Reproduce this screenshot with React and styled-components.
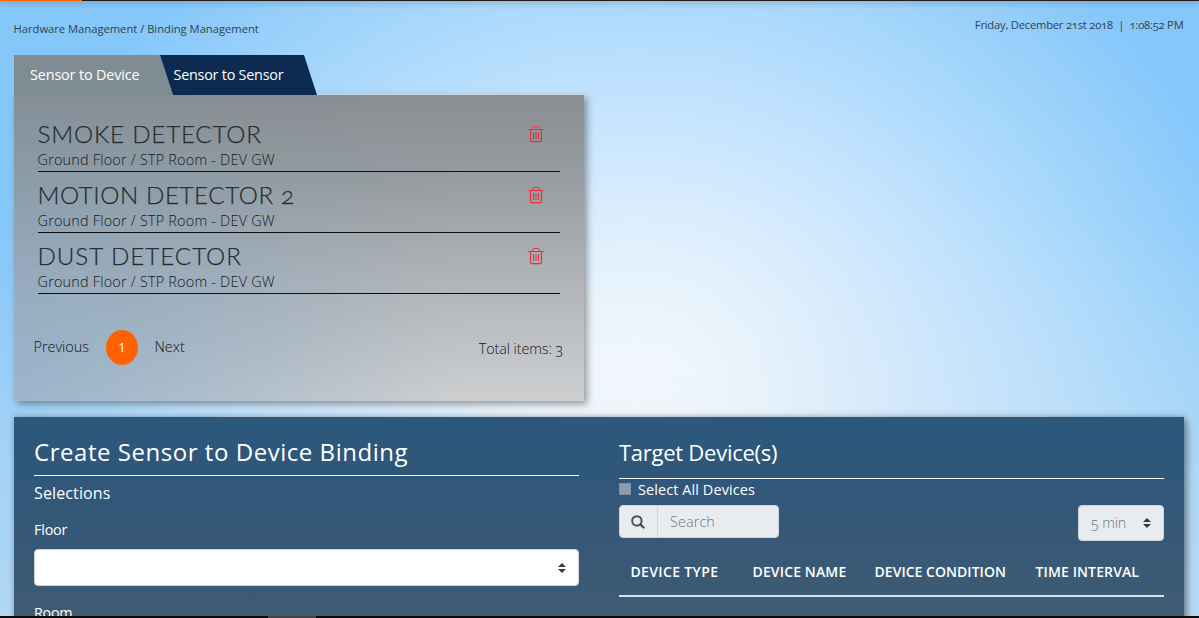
import React from "react";
import styled, { createGlobalStyle } from "styled-components";

const GlobalStyle = createGlobalStyle`
  *, *::before, *::after { box-sizing: border-box; }
  body {
    margin: 0;
    overflow: hidden;
    font-family: "Open Sans", "Liberation Sans", sans-serif;
    font-size: 14.4px;
    font-weight: 400;
    font-variant-numeric: oldstyle-nums;
    color: #212529;
  }
`;

const Page = styled.div`
  height: 618px;
  display: flex;
  flex-direction: column;
  overflow: hidden;
  background:
    linear-gradient(180deg, rgba(205, 226, 242, 0) 35%, rgba(205, 226, 242, 0.6) 100%),
    radial-gradient(ellipse 635px 600px at 635px 440px, #ffffff 0%, #f8fbfe 15%, #d8ecfd 40%, #b8defd 65%, #9ed3fb 84%, #86c7fa 103%);
`;

const LoadingBar = styled.div`
  flex: none;
  height: 1px;
  background: linear-gradient(90deg, #ff6200 82px, #221a18 82px);
  box-shadow: 0 0 7px 1px rgba(40, 60, 80, 0.45);
`;

const TopBar = styled.header`
  flex: none;
  height: 54px;
  padding: 16px 15.5px 0 13.5px;
  display: flex;
  justify-content: space-between;
  font-size: 11.2px;
  line-height: 16px;
  color: #2c4354;
  white-space: pre;
`;

const Breadcrumb = styled.span`
  padding-top: 4px;
`;

const Clock = styled.time`
  letter-spacing: -0.21px;
`;

const Content = styled.main`
  flex: 1;
  min-height: 0;
  padding: 0 15px 0 14px;
  display: flex;
  flex-direction: column;
  overflow: hidden;
`;

const Tabs = styled.nav`
  flex: none;
  display: flex;
  height: 40px;
  z-index: 1;
`;

const Tab = styled.button`
  height: 40px;
  width: ${(p) => (p.$active ? 159 : 157)}px;
  margin: 0 0 0 ${(p) => (p.$active ? 0 : -13)}px;
  padding: 0 0 1px ${(p) => (p.$active ? 16 : 13.5)}px;
  border: 0;
  text-align: left;
  font: inherit;
  letter-spacing: ${(p) => (p.$active ? -0.14 : -0.24)}px;
  color: #fff;
  background: ${(p) => (p.$active ? "#808c94" : "#0d2b50")};
  clip-path: ${(p) =>
    p.$active
      ? "polygon(0 0, 146px 0, 100% 100%, 0 100%)"
      : "polygon(0 0, 144px 0, 100% 100%, 13px 100%)"};
`;

const BindingPanel = styled.section`
  flex: none;
  width: 570px;
  height: 306px;
  padding: 25px 24px 0;
  background:
    radial-gradient(ellipse 75% 95% at 0% 92%, rgba(130, 172, 210, 0.5), rgba(130, 165, 195, 0) 100%),
    linear-gradient(90deg, rgba(110, 140, 160, 0.25), rgba(110, 140, 160, 0) 80%),
    linear-gradient(180deg, #8b8e92 0%, #979da1 28%, #b0b4b8 60%, #cdcfd1 100%);
  box-shadow: 3px 3px 7px rgba(60, 60, 60, 0.5), 0 -1px 0 rgba(222, 228, 232, 0.9);
`;

const Binding = styled.article`
  height: ${(p) => (p.$first ? 52 : 61)}px;
  padding-top: ${(p) => (p.$first ? 0 : 9)}px;
  width: 522px;
  display: flex;
  justify-content: space-between;
  border-bottom: 1px solid #0d0f11;
`;

const BindingName = styled.h2`
  margin: -1px 0 0 -0.5px;
  font-family: Lato, sans-serif;
  font-size: 24.2px;
  font-weight: 300;
  line-height: 29px;
  letter-spacing: ${(p) => p.$spacing}px;
  color: #23292d;
  -webkit-text-stroke: 0.25px #33393d;
`;

const BindingPlace = styled.p`
  margin: 2px 0 0 -0.5px;
  font-weight: 300;
  line-height: 20px;
  letter-spacing: 0.22px;
  color: #14181b;
`;

const IconButton = styled.button`
  width: 16px;
  height: 18px;
  margin: 5px 16px 0 0;
  padding: 0;
  border: 0;
  background: none;
  color: #e2333f;
  svg { display: block; }
`;

const Pager = styled.div`
  display: flex;
  align-items: center;
  height: 36px;
  margin: 35px -4px 0;
  font-weight: 300;
  color: #101417;
`;

const PageLink = styled.span`
  margin-left: -0.5px;
  padding-bottom: 1px;
`;

const CurrentPage = styled.span`
  width: 32px;
  height: 35px;
  margin: 0 17px;
  display: flex;
  align-items: center;
  justify-content: center;
  border-radius: 50%;
  background: #ff6200;
  color: #fff;
  font-size: 13px;
  font-weight: 400;
  font-variant-numeric: lining-nums;
`;

const Total = styled.span`
  margin: 3px 1px 0 auto;
  letter-spacing: -0.1px;
`;

const CreatePanel = styled.section`
  flex: none;
  height: 240px;
  margin-top: 16px;
  padding: 0 20px;
  display: grid;
  grid-template-columns: 545px 545px;
  column-gap: 40px;
  color: #fff;
  background: linear-gradient(180deg, #2b587c 0%, #30577a 25%, #375976 55%, #3f5b72 85%);
  box-shadow: 3px 3px 7px rgba(60, 60, 60, 0.55), 0 -1px 5px rgba(80, 80, 80, 0.25);
`;

const Title = styled.h3`
  margin: 0;
  height: ${(p) => p.$height}px;
  padding-top: ${(p) => p.$top}px;
  border-bottom: 1px solid #fff;
  font-size: ${(p) => p.$size}px;
  font-weight: 400;
  line-height: 32px;
  letter-spacing: ${(p) => p.$spacing}px;
`;

const Subtitle = styled.div`
  padding-top: 7px;
  font-size: 16px;
  line-height: 21px;
  letter-spacing: 0.13px;
`;

const Label = styled.label`
  display: block;
  margin-top: ${(p) => p.$gap}px;
  line-height: 20px;
  letter-spacing: ${(p) => p.$spacing}px;
`;

const SelectBox = styled.div`
  width: ${(p) => p.$width};
  height: ${(p) => p.$height}px;
  margin-top: ${(p) => p.$gap || 0}px;
  padding: 0 12px;
  display: flex;
  align-items: center;
  justify-content: space-between;
  border: 1px solid #ced4da;
  border-radius: 4px;
  background: ${(p) => (p.$disabled ? "#e9ecef" : "#fff")};
  color: #6c757d;
  font-weight: 300;
  letter-spacing: -0.15px;
`;

const SelectValue = styled.span`
  padding-bottom: 2px;
`;

const CheckRow = styled.label`
  display: flex;
  align-items: center;
  gap: 7px;
  height: 22px;
  padding-bottom: 2px;
  letter-spacing: 0.12px;
`;

const CheckBox = styled.span`
  width: 12px;
  height: 12px;
  background: #8d9dad;
  border: 1px solid #7d8fa1;
`;

const Tools = styled.div`
  display: flex;
  justify-content: space-between;
  align-items: flex-start;
  margin-top: 4px;
`;

const SearchGroup = styled.div`
  width: 160px;
  height: 33px;
  display: flex;
  border: 1px solid #ced4da;
  border-radius: 4px;
  background: #e9ecef;
`;

const SearchIconCell = styled.span`
  width: 38px;
  padding-right: 1px;
  display: flex;
  align-items: center;
  justify-content: center;
  border-right: 1px solid #ced4da;
  color: #495057;
`;

const SearchText = styled.span`
  padding-left: 12px;
  line-height: 31px;
  font-weight: 300;
  letter-spacing: 0.1px;
  color: #6c757d;
`;

const HeadRow = styled.div`
  display: grid;
  grid-template-columns: 122px 122px 161px 1fr;
  height: 56px;
  padding: 20px 0 0 11.5px;
  border-bottom: 2px solid #dee2e6;
  font-size: 14px;
  line-height: 22px;
  font-weight: 600;
`;

const HeadCell = styled.span`
  white-space: nowrap;
  letter-spacing: ${(p) => p.$spacing}px;
`;

const Scrollbar = styled.div`
  flex: none;
  height: 2px;
  background: linear-gradient(90deg, #0b0b0c 268px, #444 268px, #444 316px, #0b0b0c 316px);
`;

const Trash = () => (
  <svg width="16" height="18" viewBox="0 0 16 18" fill="none" stroke="currentColor">
    <path d="M.5 4.5h15M4.6 4.2V3.3Q4.6 1.5 6.4 1.5h3.2q1.8 0 1.8 1.8v.9" />
    <path d="M2.5 4.5v11q0 1.2 1.2 1.2h8.6q1.2 0 1.2-1.2v-11" strokeWidth="1.2" />
    <path d="M5.5 7v7M8 7v7M10.5 7v7" strokeWidth="1.1" />
  </svg>
);

const Magnifier = () => (
  <svg width="14" height="14" viewBox="0 0 14 14" fill="none" stroke="currentColor">
    <circle cx="5.9" cy="5.9" r="4.7" strokeWidth="2" />
    <path d="M9.4 9.4l3.1 3.1" strokeWidth="2.4" strokeLinecap="round" />
  </svg>
);

const Arrows = () => (
  <svg width="8" height="10" viewBox="0 0 4 5">
    <path fill="#343a40" d="M2 0L0 2h4zm0 5L0 3h4z" />
  </svg>
);

const bindings = [
  { name: "SMOKE DETECTOR", spacing: 0.78 },
  { name: "MOTION DETECTOR 2", spacing: 0.58 },
  { name: "DUST DETECTOR", spacing: 0.95 },
];

const columns = [
  { label: "DEVICE TYPE", spacing: 0.35 },
  { label: "DEVICE NAME", spacing: 0.14 },
  { label: "DEVICE CONDITION", spacing: 0.03 },
  { label: "TIME INTERVAL", spacing: 0.12 },
];

export default function App() {
  return (
    <Page>
      <GlobalStyle />
      <LoadingBar />
      <TopBar>
        <Breadcrumb>Hardware Management / Binding Management</Breadcrumb>
        <Clock>{"Friday, December 21st 2018  |  1:08:52 PM"}</Clock>
      </TopBar>
      <Content>
        <Tabs>
          <Tab $active>Sensor to Device</Tab>
          <Tab>Sensor to Sensor</Tab>
        </Tabs>
        <BindingPanel>
          {bindings.map((b, i) => (
            <Binding key={b.name} $first={i === 0}>
              <div>
                <BindingName $spacing={b.spacing}>{b.name}</BindingName>
                <BindingPlace>Ground Floor / STP Room - DEV GW</BindingPlace>
              </div>
              <IconButton aria-label="Delete"><Trash /></IconButton>
            </Binding>
          ))}
          <Pager>
            <PageLink>Previous</PageLink>
            <CurrentPage>1</CurrentPage>
            <PageLink>Next</PageLink>
            <Total>Total items: 3</Total>
          </Pager>
        </BindingPanel>
        <CreatePanel>
          <div>
            <Title $height={59} $top={19} $size={24} $spacing={0.54}>Create Sensor to Device Binding</Title>
            <Subtitle>Selections</Subtitle>
            <Label $gap={16} $spacing={-0.2}>Floor</Label>
            <SelectBox $width="100%" $height={37} $gap={9}><span /><Arrows /></SelectBox>
            <Label $gap={17} $spacing={-0.3}>Room</Label>
          </div>
          <div>
            <Title $height={62} $top={19} $size={22} $spacing={-0.26}>Target Device(s)</Title>
            <CheckRow><CheckBox />Select All Devices</CheckRow>
            <Tools>
              <SearchGroup>
                <SearchIconCell><Magnifier /></SearchIconCell>
                <SearchText>Search</SearchText>
              </SearchGroup>
              <SelectBox $width="86px" $height={36} $disabled><SelectValue>5 min</SelectValue><Arrows /></SelectBox>
            </Tools>
            <HeadRow>
              {columns.map((c) => (
                <HeadCell key={c.label} $spacing={c.spacing}>{c.label}</HeadCell>
              ))}
            </HeadRow>
          </div>
        </CreatePanel>
      </Content>
      <Scrollbar />
    </Page>
  );
}
